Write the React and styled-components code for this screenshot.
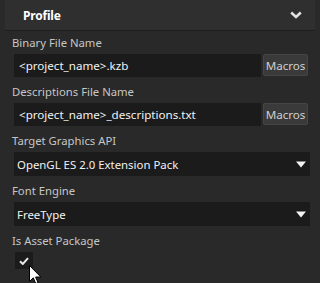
import React from 'react';
import styled, { createGlobalStyle } from 'styled-components';

const GlobalStyle = createGlobalStyle`
  html, body {
    margin: 0;
    padding: 0;
    background: #292929;
  }
  body {
    font-family: 'Noto Sans', 'Open Sans', sans-serif;
    overflow: hidden;
  }
`;

const Panel = styled.div`
  position: relative;
  width: 320px;
  height: 283px;
  background: #292929;
  overflow: hidden;
`;

const Header = styled.div`
  display: flex;
  align-items: center;
  justify-content: space-between;
  height: 30px;
  margin: 0 5px;
  padding: 0 13px 0 18px;
  background: #2f2f2f;
  border-bottom: 1px solid #1f1f1f;
`;

const Title = styled.span`
  font-size: 12px;
  font-weight: 700;
  letter-spacing: -0.2px;
  color: #ffffff;
`;

const Body = styled.div`
  display: flex;
  flex-direction: column;
  gap: 3px;
  padding: 0 10px 0 12px;
`;

const Field = styled.div`
  display: flex;
  flex-direction: column;
`;

const Label = styled.div`
  height: 23px;
  line-height: 23px;
  font-size: 11.3px;
  color: #c6c6c6;
`;

const Row = styled.div`
  display: flex;
  gap: 2px;
  padding-left: 2px;
`;

const TextBox = styled.div`
  flex: 0 0 247px;
  height: 23px;
  line-height: 23px;
  padding: 0 5px;
  box-sizing: border-box;
  background: #1b1b1b;
  color: #f2f2f2;
  font-size: 11.6px;
  white-space: nowrap;
  overflow: hidden;
`;

const MacroButton = styled.div`
  width: 45px;
  height: 22px;
  box-sizing: border-box;
  display: flex;
  align-items: center;
  justify-content: center;
  background: #3a3a3a;
  border: 1px solid #454545;
  border-radius: 2px;
  color: #cfcfcf;
  font-size: 11.6px;
`;

const Select = styled.div`
  display: flex;
  align-items: center;
  justify-content: space-between;
  width: 296px;
  height: 24px;
  padding: 0 4px 0 3px;
  box-sizing: border-box;
  background: #1b1b1b;
  color: #f2f2f2;
  font-size: 11.4px;
`;

const CheckBox = styled.div`
  width: 18px;
  height: 17px;
  margin-left: 3px;
  display: flex;
  align-items: center;
  justify-content: center;
  background: #1b1b1b;
`;

const Cursor = styled.svg`
  position: absolute;
  left: 29px;
  top: 265px;
`;

const Chevron = () => (
  <svg width="12" height="8" viewBox="0 0 12 8">
    <path d="M1.2 1.5 L6 6 L10.8 1.5" fill="none" stroke="#e2e2e2" strokeWidth="2.6" />
  </svg>
);

const Arrow = () => (
  <svg width="10" height="7" viewBox="0 0 10 7">
    <path d="M0 0.5 H10 L5 6.5 Z" fill="#f4f4f4" />
  </svg>
);

const Check = () => (
  <svg width="10" height="8" viewBox="0 0 10 8">
    <path d="M1 4.2 L3.8 7 L9 1.2" fill="none" stroke="#e6e6e6" strokeWidth="2" />
  </svg>
);

const TextField = ({ label, value }) => (
  <Field>
    <Label>{label}</Label>
    <Row>
      <TextBox>{value}</TextBox>
      <MacroButton>Macros</MacroButton>
    </Row>
  </Field>
);

const SelectField = ({ label, value }) => (
  <Field>
    <Label>{label}</Label>
    <Row>
      <Select>
        <span>{value}</span>
        <Arrow />
      </Select>
    </Row>
  </Field>
);

export default function App() {
  return (
    <Panel>
      <GlobalStyle />
      <Header>
        <Title>Profile</Title>
        <Chevron />
      </Header>
      <Body>
        <TextField label="Binary File Name" value="<project_name>.kzb" />
        <TextField label="Descriptions File Name" value="<project_name>_descriptions.txt" />
        <SelectField label="Target Graphics API" value="OpenGL ES 2.0 Extension Pack" />
        <SelectField label="Font Engine" value="FreeType" />
        <Field>
          <Label>Is Asset Package</Label>
          <CheckBox>
            <Check />
          </CheckBox>
        </Field>
      </Body>
      <Cursor width="13" height="20" viewBox="0 0 13 20">
        <path
          d="M0.5 0.5 V16.5 L4.3 12.8 L6.8 18.6 L9 17.6 L6.6 12 H11.8 Z"
          fill="#ffffff"
          stroke="#000000"
          strokeWidth="1"
          strokeLinejoin="miter"
        />
      </Cursor>
    </Panel>
  );
}
